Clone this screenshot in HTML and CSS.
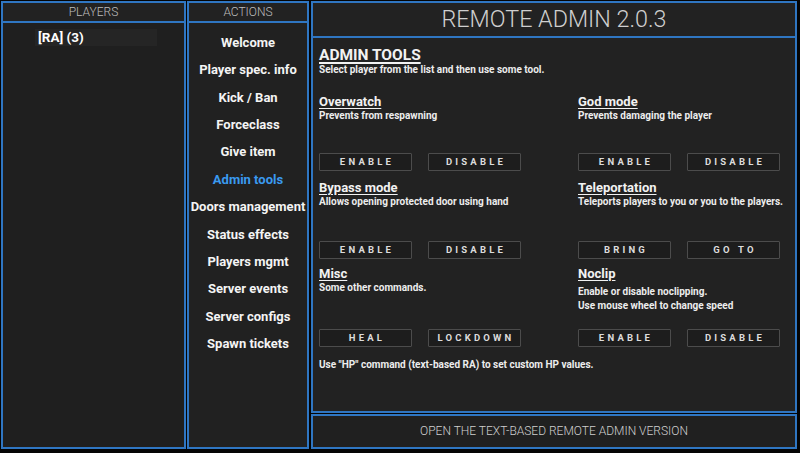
FILE: index.html
```html
<!DOCTYPE html>
<html>
<head>
<meta charset="utf-8">
<link rel="stylesheet" href="styles.css">
</head>
<body>
<div class="app">
  <div class="col players">
    <div class="phead">PLAYERS</div>
    <div class="pbody">
      <div class="player">[RA] (3)</div>
    </div>
  </div>
  <div class="col actions">
    <div class="phead">ACTIONS</div>
    <div class="pbody menu">
      <div class="mi">Welcome</div>
      <div class="mi">Player spec. info</div>
      <div class="mi">Kick / Ban</div>
      <div class="mi">Forceclass</div>
      <div class="mi">Give item</div>
      <div class="mi active">Admin tools</div>
      <div class="mi">Doors management</div>
      <div class="mi">Status effects</div>
      <div class="mi">Players mgmt</div>
      <div class="mi">Server events</div>
      <div class="mi">Server configs</div>
      <div class="mi">Spawn tickets</div>
    </div>
  </div>
  <div class="col main">
    <div class="mhead">REMOTE ADMIN 2.0.3</div>
    <div class="mbody">
      <div class="h1">ADMIN TOOLS</div>
      <div class="lead">Select player from the list and then use some tool.</div>
      <div class="tools">
        <div class="info"><div class="h2">Overwatch</div><div class="desc">Prevents from respawning</div></div>
        <div class="info"><div class="h2">God mode</div><div class="desc">Prevents damaging the player</div></div>
        <div class="btns"><div class="btn">ENABLE</div><div class="btn">DISABLE</div></div>
        <div class="btns"><div class="btn">ENABLE</div><div class="btn">DISABLE</div></div>
        <div class="info"><div class="h2">Bypass mode</div><div class="desc">Allows opening protected door using hand</div></div>
        <div class="info"><div class="h2">Teleportation</div><div class="desc">Teleports players to you or you to the players.</div></div>
        <div class="btns"><div class="btn">ENABLE</div><div class="btn">DISABLE</div></div>
        <div class="btns"><div class="btn">BRING</div><div class="btn">GO TO</div></div>
        <div class="info"><div class="h2">Misc</div><div class="desc">Some other commands.</div></div>
        <div class="info"><div class="h2">Noclip</div><div class="desc tall">Enable or disable noclipping.<br>Use mouse wheel to change speed</div></div>
        <div class="btns"><div class="btn">HEAL</div><div class="btn">LOCKDOWN</div></div>
        <div class="btns"><div class="btn">ENABLE</div><div class="btn">DISABLE</div></div>
      </div>
      <div class="note">Use "HP" command (text-based RA) to set custom HP values.</div>
    </div>
    <div class="mfoot">OPEN THE TEXT-BASED REMOTE ADMIN VERSION</div>
  </div>
</div>
</body>
</html>
```
FILE: styles.css
```css
html, body {
  margin: 0;
  padding: 0;
  background: #050505;
}
body {
  font-family: Roboto, "Liberation Sans", sans-serif;
  color: #f2f2f2;
}
.app {
  display: flex;
  height: 453px;
  box-sizing: border-box;
  padding: 1px 3px 4px 1px;
}
.col {
  display: flex;
  flex-direction: column;
}
.players { width: 185px; }
.actions { width: 122px; margin-left: 1px; }
.main { width: 486px; margin-left: 2px; }

.phead {
  height: 22px;
  box-sizing: border-box;
  border: 2px solid #2f76c2;
  background: #222;
  color: #bdbdbd;
  font-size: 12px;
  font-weight: 300;
  line-height: 18px;
  text-align: center;
}
.pbody {
  flex: 1;
  border: 2px solid #2f76c2;
  border-top: 0;
  background: #212121;
}
.players .pbody { background: #1f1f1f; }
.player {
  margin: 6px 27px 0 32px;
  height: 17px;
  line-height: 17px;
  padding-left: 3px;
  background: #252525;
  font-weight: 700;
  font-size: 13.5px;
  color: #fff;
}
.menu { padding-top: 6px; }
.mi {
  text-align: center;
  font-weight: 700;
  font-size: 13px;
  line-height: 27.36px;
  color: #f4f4f4;
}
.mi.active { color: #3a9af0; }

.mhead {
  height: 37px;
  box-sizing: border-box;
  border: 2px solid #2f76c2;
  background: #222;
  color: #cfcfcf;
  font-size: 23.3px;
  font-weight: 300;
  line-height: 33px;
  text-align: center;
}
.mbody {
  flex: 1;
  border: 2px solid #2f76c2;
  border-top: 0;
  background: #222;
  padding: 8px 0 0 6px;
}
.mfoot {
  margin-top: 1px;
  height: 35px;
  box-sizing: border-box;
  border: 2px solid #2f76c2;
  background: #202020;
  color: #cfcfcf;
  font-size: 12px;
  font-weight: 300;
  line-height: 31px;
  text-align: center;
}
.h1 {
  font-size: 15.5px;
  font-weight: 700;
  line-height: 18px;
  text-decoration: underline;
  text-decoration-thickness: 2px;
  text-underline-offset: 2px;
}
.lead, .desc, .note {
  font-size: 10px;
  font-weight: 700;
  line-height: 12px;
  color: #ededed;
}
.tools {
  margin-top: 18px;
  display: grid;
  grid-template-columns: 259px 1fr;
  grid-template-rows: 59px 27px 61px 25px 63px 18px;
}
.h2 {
  font-size: 13px;
  font-weight: 700;
  line-height: 15px;
  text-decoration: underline;
  text-underline-offset: 2px;
}
.desc { line-height: 13px; }
.desc.tall { margin-top: 4px; line-height: 14px; }
.btns {
  display: flex;
  gap: 16px;
}
.btn {
  width: 93px;
  height: 18px;
  box-sizing: border-box;
  border: 1px solid #4c4c4c;
  border-radius: 1px;
  background: #1d1d1d;
  color: #dcdcdc;
  font-size: 9.5px;
  font-weight: 700;
  letter-spacing: 3.2px;
  line-height: 16px;
  text-align: center;
  padding-left: 3px;
}
.note { margin-top: 12px; }
```
